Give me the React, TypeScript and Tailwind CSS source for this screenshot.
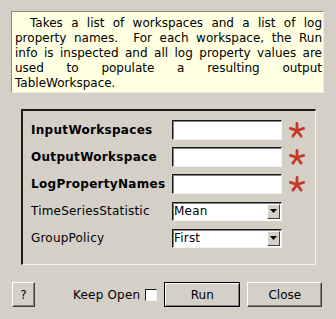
import React from 'react';

const font = { fontFamily: '"DejaVu Sans", Verdana, sans-serif' };

function Star() {
  const arms = [0, 72, 144, 216, 288];
  return (
    <svg width="18" height="18" viewBox="0 0 18 18" className="shrink-0">
      {arms.map(a => {
        const r = (a * Math.PI) / 180;
        return (
          <line
            key={a}
            x1="9"
            y1="9.5"
            x2={9 + Math.sin(r) * 7}
            y2={9.5 - Math.cos(r) * 7}
            stroke="#c4392a"
            strokeWidth="2.8"
            strokeLinecap="round"
          />
        );
      })}
    </svg>
  );
}

function TextField() {
  return (
    <div className="w-[110px] h-[20px] bg-white border-t border-l border-[#1a1a1a] border-b border-r border-b-[#f4f2ee] border-r-[#f4f2ee] shadow-[inset_1px_1px_0_#808080]" />
  );
}

function Combo({ value }: { value: string }) {
  return (
    <div className="w-[110px] h-[19px] bg-white flex items-center border-t border-l border-[#1a1a1a] border-b border-r border-b-[#f4f2ee] border-r-[#f4f2ee] shadow-[inset_1px_1px_0_#808080]">
      <span className="flex-1 pl-[1px] text-[12px] leading-none text-black tracking-[0.2px]">{value}</span>
      <div className="w-[13px] h-[15px] mr-[1px] bg-[#d4d0c8] flex items-center justify-center border-t border-l border-white border-b border-r border-b-[#404040] border-r-[#404040]">
        <svg width="7" height="4" viewBox="0 0 7 4">
          <polygon points="0,0 7,0 3.5,4" fill="#000" />
        </svg>
      </div>
    </div>
  );
}

function Row({ label, bold, children }: { label: string; bold?: boolean; children: React.ReactNode }) {
  return (
    <div className="flex items-center h-[20px]">
      <span className={`w-[141px] text-[12px] text-black whitespace-nowrap ${bold ? 'font-bold tracking-[0.3px]' : 'tracking-[0.2px]'}`}>{label}</span>
      {children}
    </div>
  );
}

const lines = [
  'Takes a list of workspaces and a list of log',
  'property names.\u00a0 For each workspace, the Run',
  'info is inspected and all log property values are',
  'used to populate a resulting output',
];

export default function App() {
  return (
    <div className="w-[336px] h-[319px] bg-[#d4d0c8] overflow-hidden flex flex-col" style={font}>
      {/* description */}
      <div className="ml-[11px] mt-[11px] w-[313px] h-[82px] bg-[#ffffe1] border border-t-[#8a8a8a] border-l-[#8a8a8a] border-b-[#ecebe6] border-r-[#ecebe6] pl-[3px] pr-[1px] pt-[4px] text-[12px] leading-[15px] text-black">
        {lines.map((l, i) => (
          <div key={i} className={`text-justify [text-align-last:justify] whitespace-nowrap ${i === 0 ? 'pl-[15px]' : ''}`}>
            {l}
          </div>
        ))}
        <div>TableWorkspace.</div>
      </div>

      {/* properties group */}
      <div className="ml-[21px] mt-[16px] w-[295px] h-[156px] border-t-2 border-l-2 border-t-[#1a1a1a] border-l-[#1a1a1a] border-b border-r border-b-[#f4f2ee] border-r-[#f4f2ee] pl-[8px] pt-[9px] flex flex-col gap-[7px]">
        <Row label="InputWorkspaces" bold>
          <TextField />
          <span className="ml-[6px]"><Star /></span>
        </Row>
        <Row label="OutputWorkspace" bold>
          <TextField />
          <span className="ml-[6px]"><Star /></span>
        </Row>
        <Row label="LogPropertyNames" bold>
          <TextField />
          <span className="ml-[6px]"><Star /></span>
        </Row>
        <Row label="TimeSeriesStatistic">
          <Combo value="Mean" />
        </Row>
        <Row label="GroupPolicy">
          <Combo value="First" />
        </Row>
      </div>

      {/* buttons */}
      <div className="mt-[17px] flex items-center h-[25px] text-[12px] text-black">
        <button className="ml-[12px] w-[23px] h-[25px] bg-[#d4d0c8] border-t border-l border-white border-b border-r border-b-[#404040] border-r-[#404040] shadow-[inset_-1px_-1px_0_#808080] text-[12px]">
          ?
        </button>
        <span className="ml-[38px] whitespace-nowrap tracking-[0.2px]">Keep Open</span>
        <div className="ml-[5px] w-[12px] h-[12px] bg-white border-t border-l border-[#1a1a1a] border-b border-r border-b-[#f4f2ee] border-r-[#f4f2ee]" />
        <button className="ml-[7px] w-[76px] h-[25px] bg-[#d4d0c8] border border-[#000] shadow-[inset_1px_1px_0_#fff,inset_-1px_-1px_0_#808080] text-[12px]">
          Run
        </button>
        <button className="ml-[7px] w-[75px] h-[25px] bg-[#d4d0c8] border-t border-l border-white border-b border-r border-b-[#404040] border-r-[#404040] shadow-[inset_-1px_-1px_0_#808080] text-[12px]">
          Close
        </button>
      </div>
    </div>
  );
}
